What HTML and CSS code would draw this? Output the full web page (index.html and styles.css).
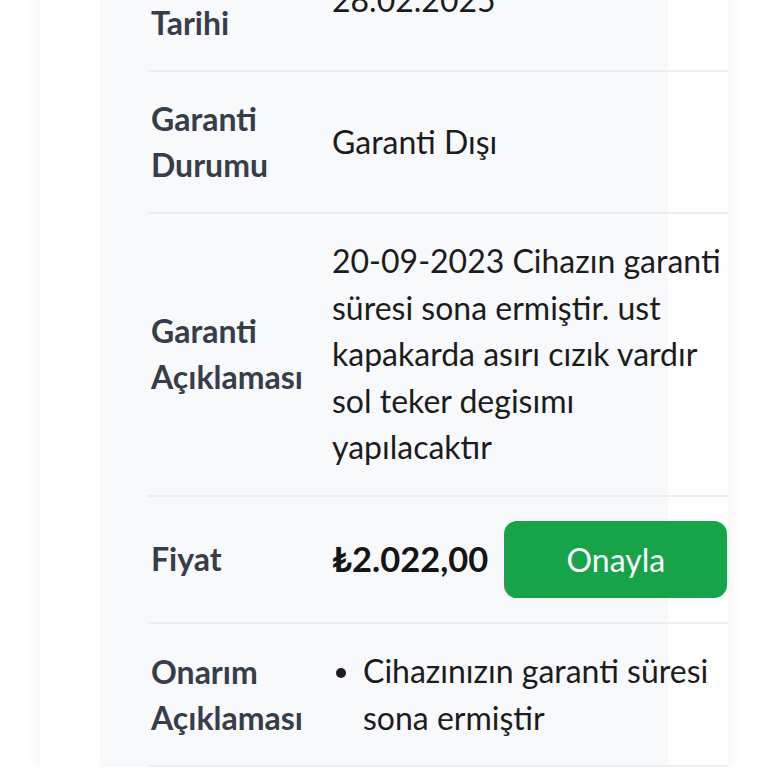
FILE: index.html
```html
<!DOCTYPE html>
<html lang="tr">
<head>
<meta charset="utf-8">
<title>Servis Detayı</title>
<link rel="stylesheet" href="styles.css">
</head>
<body>
<div class="card">
  <div class="panel">
    <div class="table">
      <div class="row row-first">
        <div class="label">Satış<br>Tarihi</div>
        <div class="value">28.02.2025</div>
      </div>
      <div class="row">
        <div class="label">Garanti<br>Durumu</div>
        <div class="value">Garanti Dışı</div>
      </div>
      <div class="row">
        <div class="label">Garanti<br>Açıklaması</div>
        <div class="value">20-09-2023 Cihazın garanti süresi sona ermiştir. ust kapakarda asırı cızık vardır sol teker degisımı yapılacaktır</div>
      </div>
      <div class="row">
        <div class="label">Fiyat</div>
        <div class="value price-cell">
          <span class="price">₺2.022,00</span>
          <button class="approve">Onayla</button>
        </div>
      </div>
      <div class="row">
        <div class="label">Onarım<br>Açıklaması</div>
        <div class="value">
          <ul class="bullets">
            <li>Cihazınızın garanti süresi sona ermiştir</li>
          </ul>
        </div>
      </div>
    </div>
  </div>
</div>
</body>
</html>
```

FILE: styles.css
```css
html, body {
  margin: 0;
  padding: 0;
  background: #ffffff;
  overflow: hidden;
}

body {
  font-family: "Lato", "Noto Sans", sans-serif;
  color: #1c1c1e;
}

.card {
  margin-left: 40px;
  width: 688px;
  min-height: 768px;
  background: #ffffff;
  box-shadow: 0 0 18px rgba(0, 0, 0, 0.06);
  padding-left: 60px;
  box-sizing: border-box;
}

.panel {
  width: 568px;
  min-height: 768px;
  background: #f8f9fb;
  padding-left: 48px;
  box-sizing: border-box;
}

.table {
  width: 580px;
  margin-top: -70px;
}

.row {
  display: grid;
  grid-template-columns: 184px 1fr;
  align-items: center;
  padding: 24px 0;
  border-bottom: 2px solid #eceef1;
}

.label {
  padding-left: 3px;
  font-weight: 700;
  font-size: 32px;
  line-height: 46px;
  color: #373d49;
}

.value {
  font-size: 32px;
  line-height: 46.6px;
  color: #1c1c1e;
}

.price-cell {
  display: flex;
  align-items: center;
  gap: 16px;
}

.price {
  font-weight: 700;
  font-size: 34.5px;
  color: #151515;
}

.approve {
  width: 223px;
  height: 77px;
  border: none;
  border-radius: 13px;
  background: #17a34a;
  color: #ffffff;
  font-family: "Lato", "Noto Sans", sans-serif;
  font-size: 32px;
}

.bullets {
  margin: 0;
  padding-left: 31px;
}

.bullets li::marker {
  font-size: 30px;
}
```
